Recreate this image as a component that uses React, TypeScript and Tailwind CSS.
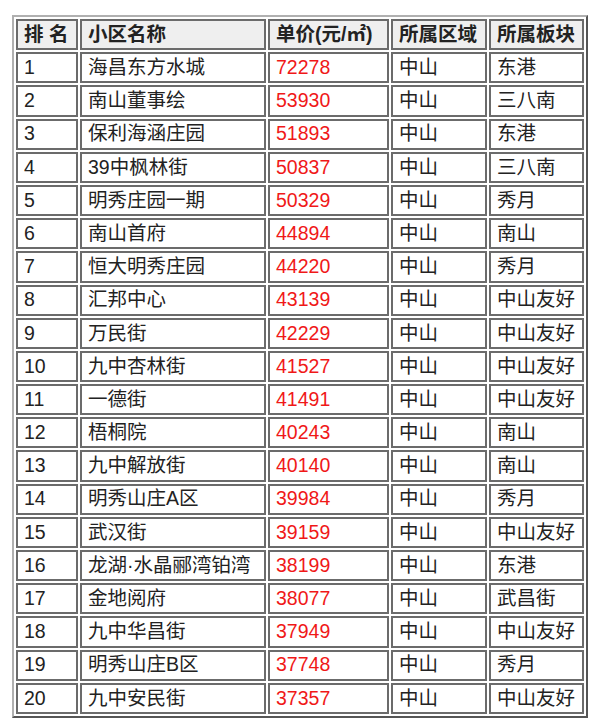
import React from 'react';

interface Row {
  rank: number;
  name: string;
  price: string;
  district: string;
  block: string;
}

const rows: Row[] = [
  { rank: 1, name: '海昌东方水城', price: '72278', district: '中山', block: '东港' },
  { rank: 2, name: '南山董事绘', price: '53930', district: '中山', block: '三八南' },
  { rank: 3, name: '保利海涵庄园', price: '51893', district: '中山', block: '东港' },
  { rank: 4, name: '39中枫林街', price: '50837', district: '中山', block: '三八南' },
  { rank: 5, name: '明秀庄园一期', price: '50329', district: '中山', block: '秀月' },
  { rank: 6, name: '南山首府', price: '44894', district: '中山', block: '南山' },
  { rank: 7, name: '恒大明秀庄园', price: '44220', district: '中山', block: '秀月' },
  { rank: 8, name: '汇邦中心', price: '43139', district: '中山', block: '中山友好' },
  { rank: 9, name: '万民街', price: '42229', district: '中山', block: '中山友好' },
  { rank: 10, name: '九中杏林街', price: '41527', district: '中山', block: '中山友好' },
  { rank: 11, name: '一德街', price: '41491', district: '中山', block: '中山友好' },
  { rank: 12, name: '梧桐院', price: '40243', district: '中山', block: '南山' },
  { rank: 13, name: '九中解放街', price: '40140', district: '中山', block: '南山' },
  { rank: 14, name: '明秀山庄A区', price: '39984', district: '中山', block: '秀月' },
  { rank: 15, name: '武汉街', price: '39159', district: '中山', block: '中山友好' },
  { rank: 16, name: '龙湖·水晶郦湾铂湾', price: '38199', district: '中山', block: '东港' },
  { rank: 17, name: '金地阅府', price: '38077', district: '中山', block: '武昌街' },
  { rank: 18, name: '九中华昌街', price: '37949', district: '中山', block: '中山友好' },
  { rank: 19, name: '明秀山庄B区', price: '37748', district: '中山', block: '秀月' },
  { rank: 20, name: '九中安民街', price: '37357', district: '中山', block: '中山友好' },
];

const cell =
  'h-[31.2px] border-2 border-[#6b6b6b] px-[6px] py-0 text-left align-middle leading-none whitespace-nowrap';

export default function App() {
  return (
    <div
      className="min-h-[724px] bg-white pl-[12px] pt-[15px]"
      style={{ fontFamily: '"Liberation Sans", "Noto Sans CJK SC", sans-serif' }}
    >
      <table className="w-[576px] table-fixed border-separate border-spacing-[2px] border-2 border-t-[#b0b0b0] border-l-[#b0b0b0] border-r-[#555] border-b-[#555] text-[19.5px] text-[#222]">
        <colgroup>
          <col className="w-[62px]" />
          <col className="w-[186px]" />
          <col className="w-[121px]" />
          <col className="w-[96px]" />
          <col className="w-[95px]" />
        </colgroup>
        <thead>
          <tr>
            <th className={`${cell} bg-[#efefef] font-bold`}>排 名</th>
            <th className={`${cell} bg-[#efefef] font-bold`}>小区名称</th>
            <th className={`${cell} bg-[#efefef] font-bold`}>单价(元/㎡)</th>
            <th className={`${cell} bg-[#efefef] font-bold`}>所属区域</th>
            <th className={`${cell} bg-[#efefef] font-bold`}>所属板块</th>
          </tr>
        </thead>
        <tbody>
          {rows.map((r) => (
            <tr key={r.rank}>
              <td className={cell}>{r.rank}</td>
              <td className={cell}>{r.name}</td>
              <td className={`${cell} text-[#f01818]`}>{r.price}</td>
              <td className={cell}>{r.district}</td>
              <td className={cell}>{r.block}</td>
            </tr>
          ))}
        </tbody>
      </table>
    </div>
  );
}
